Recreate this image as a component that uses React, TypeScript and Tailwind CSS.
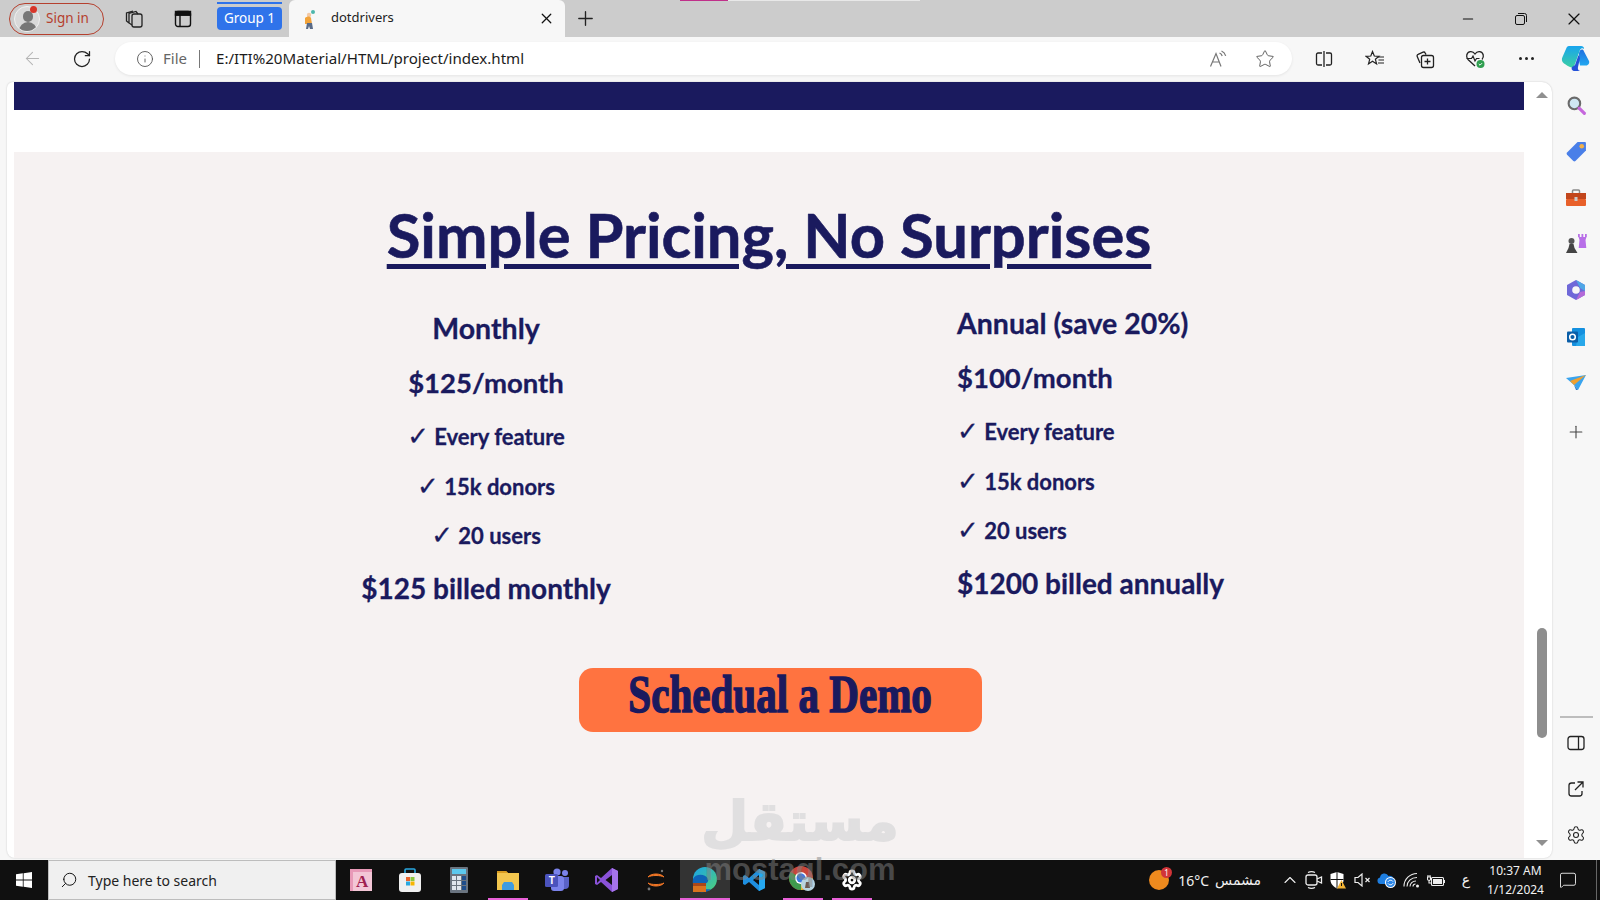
import React from 'react';
import {
  ArrowLeft, RotateCw, Info, Star, Plus, X, Minus, Search, Settings, ChevronUp,
  MessageSquare,
} from 'lucide-react';

const NAVY = 'text-[#1a1a5e]';

// --- browser chrome icons ---
const Workspaces = () => (
  <svg width="20" height="20" viewBox="0 0 20 20" fill="none" stroke="#222" strokeWidth="1.3">
    <rect x="8" y="5" width="10" height="13" rx="2" />
    <path d="M8 16 5 14V4.5L12 2.5 14 5M5 14 2.5 12V4L9 2" />
  </svg>
);
const VerticalTabs = () => (
  <svg width="18" height="18" viewBox="0 0 18 18" fill="none" stroke="#111" strokeWidth="1.4">
    <rect x="1.5" y="1.5" width="15" height="15" rx="2.5" />
    <path d="M1.5 5h15M6 5v11.5" />
    <path d="M1.5 1.5h15v3.5h-15z" fill="#111" />
  </svg>
);
const Avatar = () => (
  <div className="relative w-[26px] h-[26px] rounded-full bg-[#d9d9d9] border border-[#f0f0f0] overflow-hidden shrink-0">
    <div className="absolute left-[8px] top-[4px] w-[10px] h-[11px] rounded-full bg-[#777]" />
    <div className="absolute left-[4px] top-[15px] w-[18px] h-[12px] rounded-t-full bg-[#777]" />
  </div>
);
const Favicon = () => (
  <svg width="18" height="22" viewBox="0 0 18 22">
    <circle cx="12" cy="4" r="2" fill="#4db6ac" />
    <circle cx="8" cy="7" r="2.2" fill="#f3c9a5" />
    <path d="M4 10c2-2 5-2 6 0l1 6H4z" fill="#f2a33a" />
    <path d="M6 15h5l1 6H9l-1-3-1 3H5z" fill="#5a6b88" />
  </svg>
);
const ReadAloud = () => (
  <svg width="20" height="18" viewBox="0 0 20 18" fill="none" stroke="#777" strokeWidth="1.2">
    <path d="M1.5 16.5 7 3.5l5 13M3.5 12h7" />
    <path d="M10.5 3c1.4.6 2.3 1.6 2.7 3M12.5 1c2 .8 3.5 2.4 4.2 4.8" />
  </svg>
);
const SplitScreen = () => (
  <svg width="18" height="18" viewBox="0 0 18 18" fill="none" stroke="#222" strokeWidth="1.3">
    <path d="M7 3H3a1.5 1.5 0 0 0-1.5 1.5v9A1.5 1.5 0 0 0 3 15h4M11 3h4a1.5 1.5 0 0 1 1.5 1.5v9A1.5 1.5 0 0 1 15 15h-4" />
    <path d="M9 1v16" />
  </svg>
);
const Favorites = () => (
  <svg width="20" height="18" viewBox="0 0 20 18" fill="none" stroke="#222" strokeWidth="1.2">
    <path d="M7.5 1.5 9.3 6l4.7.3-3.6 3 1.2 4.6-4.1-2.6-4 2.6 1.2-4.6-3.6-3L5.8 6z" />
    <path d="M13 7h6M13.500 10h5.500M13 13h6" />
  </svg>
);
const Collections = () => (
  <svg width="20" height="20" viewBox="0 0 20 20" fill="none" stroke="#222" strokeWidth="1.3">
    <path d="M5 14 2.2 7.5a1.6 1.6 0 0 1 .9-2.1l5-2.2a1.6 1.6 0 0 1 2.1.8l.8 1.6" />
    <rect x="6.5" y="6.5" width="12" height="12" rx="2" />
    <path d="M12.5 9.5v6M9.5 12.5h6" />
  </svg>
);
const Health = () => (
  <svg width="21" height="20" viewBox="0 0 21 20" fill="none">
    <path d="M10 17 3 10.5C.5 8 1.5 3 5.5 2.6 7.5 2.4 9 3.5 10 5c1-1.500 2.500-2.600 4.500-2.400C18.500 3 19.500 8 17 10.500" stroke="#222" strokeWidth="1.3" />
    <path d="M1.500 9.500h5l1.500-2.500 2 5 1.500-2.500h3" stroke="#222" strokeWidth="1.2" />
    <circle cx="15.500" cy="15" r="4" fill="#2e9e4f" />
    <path d="m13.800 15 1.200 1.200 2-2" stroke="#fff" strokeWidth="1" />
  </svg>
);
const Copilot = () => (
  <svg width="29" height="27" viewBox="0 0 29 27">
    <defs>
      <linearGradient id="cpa" x1="0" y1="0" x2="0" y2="1"><stop offset="0" stopColor="#1f6fe0" /><stop offset="1" stopColor="#22a8f0" /></linearGradient>
      <linearGradient id="cpb" x1="0" y1="0" x2="0" y2="1"><stop offset="0" stopColor="#18a4ee" /><stop offset="1" stopColor="#3ccfa4" /></linearGradient>
    </defs>
    <path d="M18 8c1-4 4-4.500 5-1.500l5 9.500c.8 2-.5 4.500-3 4.500h-6l-1-5z" fill="url(#cpa)" />
    <path d="M8 1h12c2 0 3.500 1.500 3 3-1-1-3-1-4 1L14 19c-1 3-3 4-5 3-1-.5-4-2-6-3.500C.5 16.500.5 14 1.500 12L5 4c.7-2 1.500-3 3-3z" fill="url(#cpb)" />
    <path d="M14 20 17.500 10 19 13l-2 9c-.5 3 1 4 3 4h-6c-3 0-4-2-3-4z" fill="#2452d8" />
  </svg>
);
const Restore = () => (
  <svg width="12" height="12" viewBox="0 0 12 12" fill="none" stroke="#111" strokeWidth="1">
    <rect x=".5" y="2.500" width="9" height="9" rx="1.500" />
    <path d="M3 .5h6.500a2 2 0 0 1 2 2V9" />
  </svg>
);

// --- sidebar icons ---
const SideSearch = () => (
  <svg width="21" height="21" viewBox="0 0 20 20" fill="none">
    <circle cx="8" cy="8" r="5.500" fill="#cfe6f2" stroke="#6a6a6a" strokeWidth="2" />
    <path d="m12.500 12.500 5 5" stroke="#c667dd" strokeWidth="3" strokeLinecap="round" />
  </svg>
);
const SideTag = () => (
  <svg width="21" height="21" viewBox="0 0 20 20">
    <path d="M11 1h7a1 1 0 0 1 1 1v7L9 19a1.500 1.500 0 0 1-2 0L1 13a1.500 1.500 0 0 1 0-2z" fill="#4a7fe8" />
    <circle cx="15" cy="5" r="2.200" fill="#f2b04a" />
  </svg>
);
const SideTools = () => (
  <svg width="22" height="18" viewBox="0 0 22 18">
    <path d="M7.500 4V2a1 1 0 0 1 1-1h5a1 1 0 0 1 1 1v2" fill="none" stroke="#8a8a8a" strokeWidth="1.500" />
    <rect x="1" y="4" width="20" height="6" fill="#c2461c" />
    <rect x="1" y="10" width="20" height="7" rx="1" fill="#e8602a" />
    <rect x="9.500" y="8" width="3" height="4" fill="#c9c9c9" />
  </svg>
);
const SideChess = () => (
  <svg width="22" height="22" viewBox="0 0 22 22">
    <rect x="13" y="1" width="1.800" height="3" fill="#b86fe8" /><rect x="16.500" y="1" width="1.800" height="3" fill="#b86fe8" /><rect x="20" y="1" width="1.800" height="3" fill="#b86fe8" />
    <path d="M13.500 4h8l-1 3 .8 8h-7.600l.8-8z" fill="#b86fe8" />
    <circle cx="6.500" cy="8" r="3" fill="#555" />
    <path d="M4.500 11h4l1 4 3 5H1l2.500-5z" fill="#444" />
  </svg>
);
const SideM365 = () => (
  <svg width="20" height="22" viewBox="0 0 20 22" fill="none">
    <path d="M10 1 19 6v10l-9 5-9-5V6z" fill="#6f68d8" />
    <path d="M10 1 19 6v6l-5-3z" fill="#4fa6e6" />
    <path d="M10 21l9-5v-4l-5 1z" fill="#b46ad8" />
    <circle cx="10" cy="11" r="3.800" fill="#f7f7f7" />
  </svg>
);
const SideOutlook = () => (
  <svg width="20" height="20" viewBox="0 0 20 20">
    <rect x="6" y="1" width="13" height="18" rx="1" fill="#1490df" />
    <path d="M12 10l7-4v13h-9z" fill="#28a8ea" />
    <rect x="1" y="4.500" width="11" height="11" rx="1" fill="#0a5ea8" />
    <circle cx="6.500" cy="10" r="2.800" fill="none" stroke="#fff" strokeWidth="1.500" />
  </svg>
);
const SideSend = () => (
  <svg width="20" height="16" viewBox="0 0 20 16">
    <path d="M0 3 20 0 12 15 8 10z" fill="#3aa4ee" />
    <path d="M4 6 20 0 8 10z" fill="#f0a030" />
    <path d="M8 10 10 15 12 15z" fill="#2878c8" />
  </svg>
);
const SidePanel = () => (
  <svg width="18" height="16" viewBox="0 0 18 16" fill="none" stroke="#222" strokeWidth="1.300">
    <rect x="1" y="1.500" width="16" height="13" rx="2.500" />
    <path d="M11.500 1.500v13" />
  </svg>
);
const SideOpen = () => (
  <svg width="18" height="18" viewBox="0 0 18 18" fill="none" stroke="#222" strokeWidth="1.300">
    <path d="M8 3H4.500A2.500 2.500 0 0 0 2 5.500v8A2.500 2.500 0 0 0 4.500 16h8a2.500 2.500 0 0 0 2.500-2.500V11" />
    <path d="M8 10 16 2M10.500 2H16v5.500" />
  </svg>
);

// --- taskbar icons ---
const WinLogo = () => (
  <svg width="16" height="16" viewBox="0 0 16 16" fill="#fff">
    <path d="M0 2.300 6.800 1.300V7.600H0zM7.600 1.200 16 0V7.600H7.600zM0 8.400H6.800V14.700L0 13.700zM7.600 8.400H16V16L7.600 14.800z" />
  </svg>
);
const TbAccess = () => (
  <div className="relative w-[22px] h-[22px] bg-[#f3c6d6] border-l-[3px] border-t-[3px] border-[#e89ab8] flex items-center justify-center text-[17px] font-bold leading-none text-[#a02050] font-['Liberation_Serif',serif]">
    A
  </div>
);
const TbStore = () => (
  <svg width="24" height="26" viewBox="0 0 24 26">
    <path d="M7 7V3a1 1 0 0 1 1-1h8a1 1 0 0 1 1 1v4" fill="none" stroke="#29a8e0" strokeWidth="1.600" />
    <rect x="1" y="6" width="22" height="19" rx="3" fill="#f0f0f0" />
    <rect x="8" y="10" width="4" height="4" fill="#e8622c" /><rect x="12.500" y="10" width="4" height="4" fill="#8cc63f" />
    <rect x="8" y="14.500" width="4" height="4" fill="#29a8e0" /><rect x="12.500" y="14.500" width="4" height="4" fill="#f7b500" />
  </svg>
);
const TbCalc = () => (
  <svg width="18" height="26" viewBox="0 0 18 26">
    <rect width="18" height="26" rx="1" fill="#6a7480" />
    <rect x="2" y="2" width="14" height="5" fill="#5cc8ee" />
    {[9, 14, 19].map((y) => [2, 7, 12].map((x) => (
      <rect key={`${x}-${y}`} x={x} y={y} width="4" height="4" fill={x === 12 ? '#1f4e8c' : '#dfe6ee'} />
    )))}
  </svg>
);
const TbFiles = () => (
  <svg width="24" height="22" viewBox="0 0 24 22">
    <path d="M1 2h9l2 2h11v17H1z" fill="#f3c64e" />
    <path d="M1 2h9l2 2H1z" fill="#d99c20" />
    <path d="M6 21v-5l2-3h8l2 3v5z" fill="#3f9be0" />
  </svg>
);
const TbTeams = () => (
  <div className="relative w-[26px] h-[24px]">
    <svg width="26" height="24" viewBox="0 0 26 24" className="absolute inset-0">
      <circle cx="21" cy="5" r="3" fill="#7b83eb" />
      <path d="M15 9h10v8a4 4 0 0 1-4 4h-6z" fill="#5b63c8" />
      <circle cx="13" cy="4" r="3.600" fill="#7b83eb" />
      <rect x="7" y="8" width="13" height="15" rx="3" fill="#7b83eb" />
      <rect x="1" y="6" width="13" height="13" rx="1.500" fill="#4b53bc" />
    </svg>
    <span className="absolute left-[1px] top-[6px] w-[13px] h-[13px] text-center text-[10px] leading-[13px] font-bold text-white font-['Liberation_Sans',sans-serif]">T</span>
  </div>
);
const TbVS = () => (
  <svg width="24" height="26" viewBox="0 0 24 26">
    <path d="M17 1 23 4V22L17 25 6 15 2 18 0 17V9L2 8 6 11zM17 8 10.500 13 17 18z" fill="#8a52d8" />
    <path d="M2 10v6l3-3z" fill="#111" />
    <path d="M17 1 23 4V22L17 25z" fill="#a673ea" />
  </svg>
);
const TbJupyter = () => (
  <svg width="20" height="24" viewBox="0 0 20 24" fill="none">
    <path d="M2 9c3-4 13-4 16 0-3-2-13-2-16 0zM2 15c3 4 13 4 16 0-3 2-13 2-16 0z" fill="#f37726" stroke="#f37726" />
    <circle cx="16" cy="3" r="1.200" fill="#777" /><circle cx="3" cy="21" r="1.400" fill="#777" />
  </svg>
);
const TbEdge = () => (
  <svg width="26" height="26" viewBox="0 0 26 26">
    <defs>
      <linearGradient id="edg" x1="0" y1="0" x2="1" y2="1"><stop offset="0" stopColor="#1aa4e8" /><stop offset="1" stopColor="#4fd07a" /></linearGradient>
    </defs>
    <circle cx="13" cy="12" r="12" fill="url(#edg)" />
    <path d="M1 12c2-5 12-6 15 0 1 3-2 5-5 5-4 0 1 7 8 5-4 4-10 4-14 2-3-2-5-7-4-12z" fill="#0e63b8" />
    <rect x="1" y="16" width="13" height="9" fill="#d9731f" />
    <rect x="1" y="16" width="13" height="3" fill="#a9471a" />
  </svg>
);
const TbVSCode = () => (
  <svg width="24" height="24" viewBox="0 0 24 24">
    <path d="M17 1 23 4V20L17 23 7 14 3 17 1 16V8L3 7 7 10zM17 7 11 12 17 17z" fill="#1e8fe0" />
    <path d="M17 1 23 4V20L17 23z" fill="#25a8f0" />
  </svg>
);
const TbChrome = () => (
  <svg width="28" height="28" viewBox="0 0 28 28">
    <circle cx="12" cy="12" r="12" fill="#c8453a" />
    <path d="M12 12 1.600 6a12 12 0 0 0 10.400 18z" fill="#3f9a4d" />
    <path d="M12 12h12a12 12 0 0 1-12 12z" fill="#e6b93a" />
    <circle cx="12" cy="12" r="6" fill="#fff" />
    <circle cx="12" cy="12" r="4.500" fill="#3b78e0" />
    <circle cx="19" cy="18" r="7" fill="#b8d4e0" />
    <path d="M17 16h3l1 6h-5z" fill="#6d5a50" />
  </svg>
);

// --- tray icons ---
const TrayMeet = () => (
  <svg width="18" height="20" viewBox="0 0 18 20" fill="none" stroke="#eee" strokeWidth="1.300">
    <rect x="1" y="5" width="11" height="10" rx="2" />
    <path d="M12 9l4.500-2v6L12 11" />
    <path d="M3 2.500c2-1 5-1 7 0M3 17.500c2 1 5 1 7 0" />
  </svg>
);
const TrayShield = () => (
  <svg width="16" height="17" viewBox="0 0 16 17">
    <path d="M7 0l6.500 2v6c0 4-3 6.500-6.500 8.500C3.500 14.500.5 12 .5 8V2z" fill="#fff" />
    <path d="M7 0v16M.5 7.500h13" stroke="#111" strokeWidth="1" />
    <path d="M11.500 8 16 16.500H7z" fill="#f2b233" />
    <path d="M11.500 11v3" stroke="#111" strokeWidth="1" />
  </svg>
);
const TraySpeaker = () => (
  <svg width="17" height="14" viewBox="0 0 17 14" fill="none" stroke="#eee" strokeWidth="1.200">
    <path d="M1 4.500h3L8 1v12L4 9.500H1z" />
    <path d="m11.500 5 4 4M15.500 5l-4 4" />
  </svg>
);
const TrayCloud = () => (
  <svg width="20" height="17" viewBox="0 0 20 17">
    <path d="M3.500 12a3.300 3.300 0 0 1-.5-6.500A4.500 4.500 0 0 1 11.500 4 3.500 3.500 0 0 1 14 12z" fill="#1e7ee0" />
    <circle cx="13.500" cy="10.500" r="5.500" fill="#fff" />
    <circle cx="13.500" cy="10.500" r="4.500" fill="#2a86e8" />
    <path d="M11 10c.5-2 3.500-2.500 5-.5M16 11c-.5 2-3.500 2.500-5 .5" stroke="#fff" strokeWidth="1" fill="none" />
  </svg>
);
const TrayWifi = () => (
  <svg width="17" height="16" viewBox="0 0 17 16" fill="none" stroke="#eee" strokeWidth="1.100">
    <path d="M1 14.500C1 7 7 1.500 14 1.500M4 14.500c0-5 4-9 10-9M7 14.500c0-3 2.500-5.500 6-5.500M10 14.500c0-1.500 1-2.500 2.500-2.500" />
    <circle cx="14.500" cy="14" r="1.500" fill="#eee" stroke="none" />
  </svg>
);
const TrayBattery = () => (
  <svg width="18" height="13" viewBox="0 0 18 13" fill="none" stroke="#eee" strokeWidth="1.100">
    <rect x="4.500" y="3.500" width="12" height="8" rx="1" />
    <rect x="6" y="5" width="9" height="5" fill="#eee" stroke="none" />
    <path d="M17.500 6v3M1 1v2M3 1v2M.5 3h3v2a1.500 1.500 0 0 1-3 0zM2 6.500V9h2.500" />
  </svg>
);

const Tray = ({ children, className }: { children: React.ReactNode; className: string }) => (
  <div className={`flex items-center justify-center shrink-0 ${className}`}>{children}</div>
);

const ToolIcon = ({ children, className = 'w-[50px]' }: { children: React.ReactNode; className?: string }) => (
  <div className={`flex items-center justify-center shrink-0 h-full ${className}`}>{children}</div>
);

const TitleBar = () => (
  <div className="relative h-[37px] bg-[#cccccc] flex items-center shrink-0">
    <div className="absolute top-0 left-[680px] w-[48px] h-px bg-[#c0308a]" />
    <div className="absolute top-0 left-[728px] w-[192px] h-px bg-[#e8e8e8]" />
    <div className="relative ml-[9px] w-[95px] h-[32px] rounded-full border-[1.5px] border-[#b5402e] flex items-center gap-[6px] pl-[4px] text-[13.500px] text-[#b5402e]">
      <Avatar />
      <div className="absolute left-[20px] top-[2px] w-[7px] h-[7px] rounded-full bg-[#d8362a]" />
      <span className="-mt-px">Sign in</span>
    </div>
    <ToolIcon className="w-[30px] ml-[15px]"><Workspaces /></ToolIcon>
    <ToolIcon className="w-[30px] ml-[19px]"><VerticalTabs /></ToolIcon>
    <div className="relative ml-[19px] w-[65px] h-[23px] rounded-[4px] bg-[#2f73ea] text-white text-[13.500px] flex items-center justify-center">
      <span className="-mt-px">Group 1</span>
      <div className="absolute -top-[5px] inset-x-0 h-[2px] bg-[#2f73ea]" />
    </div>
    <div className="ml-[7px] w-[276px] self-end h-[37px] bg-[#f7f7f7] rounded-t-[6px] flex items-center pl-[12px] pr-[10px] text-[13px] text-[#222]">
      <Favicon />
      <span className="ml-[12px] -mt-px flex-1">dotdrivers</span>
      <X size={17} strokeWidth={1.8} className="text-[#111]" />
    </div>
    <ToolIcon className="w-[40px]"><Plus size={23} strokeWidth={1.4} className="text-[#222]" /></ToolIcon>
    <div className="ml-auto flex h-full">
      <ToolIcon className="w-[53px]"><Minus size={16} strokeWidth={1.6} className="text-[#111]" /></ToolIcon>
      <ToolIcon className="w-[53px]"><Restore /></ToolIcon>
      <ToolIcon className="w-[53px]"><X size={20} strokeWidth={1.4} className="text-[#111]" /></ToolIcon>
    </div>
  </div>
);

const AddressBar = () => (
  <div className="h-[45px] pb-[2px] bg-[#f7f7f7] flex items-center shrink-0">
    <ToolIcon className="w-[50px] ml-[7px]"><ArrowLeft size={21} strokeWidth={1.2} className="text-[#b5b5b5]" /></ToolIcon>
    <ToolIcon className="w-[50px]"><RotateCw size={20} strokeWidth={1.5} className="text-[#222]" /></ToolIcon>
    <div className="ml-[8px] w-[1177px] h-[33px] rounded-full bg-white shadow-[0_1px_3px_rgba(0,0,0,0.08)] flex items-center pl-[21px] pr-[17px] text-[15px]">
      <Info size={18} strokeWidth={1.2} className="text-[#555]" />
      <span className="ml-[9px] text-[#666]">File</span>
      <div className="ml-[12px] w-px h-[18px] bg-[#777]" />
      <span className="ml-[16px] text-[15.100px] text-[#1c1c1c]">E:/ITI%20Material/HTML/project/index.html</span>
      <div className="ml-auto flex items-center gap-[26px]">
        <ReadAloud />
        <Star size={20} strokeWidth={1.1} className="text-[#555]" />
      </div>
    </div>
    <ToolIcon className="w-[50px] ml-[7px]"><SplitScreen /></ToolIcon>
    <ToolIcon className="w-[51px]"><Favorites /></ToolIcon>
    <ToolIcon><Collections /></ToolIcon>
    <ToolIcon className="w-[51px]"><Health /></ToolIcon>
    <ToolIcon className="w-[51px]">
      <div className="flex gap-[3px]">
        <div className="w-[3px] h-[3px] rounded-full bg-[#222]" />
        <div className="w-[3px] h-[3px] rounded-full bg-[#222]" />
        <div className="w-[3px] h-[3px] rounded-full bg-[#222]" />
      </div>
    </ToolIcon>
    <ToolIcon className="w-[46px]"><Copilot /></ToolIcon>
  </div>
);

const rowHeights = ['h-[55px]', 'h-[54px]', 'h-[50px]', 'h-[49px]', 'h-[52px]', 'h-[40px]'];
const rowSizes = ['text-[28.500px]', 'text-[27.500px]', 'text-[22px]', 'text-[22px]', 'text-[22px]', 'text-[28px]'];

const PriceColumn = ({ rows, className }: { rows: string[]; className: string }) => (
  <div className={`flex flex-col ${className}`}>
    {rows.map((row, i) => (
      <div key={i} className={`${rowHeights[i]} ${rowSizes[i]} leading-[40px] font-bold ${NAVY} whitespace-nowrap [-webkit-text-stroke:0.3px_#1a1a5e]`}>
        {row.startsWith('✓') ? (
          <>
            <span className="font-['DejaVu_Sans',sans-serif] font-normal text-[26px] leading-[26px]">✓</span>{row.slice(1)}
          </>
        ) : row}
      </div>
    ))}
  </div>
);

const monthly = ['Monthly', '$125/month', '✓ Every feature', '✓ 15k donors', '✓ 20 users', '$125 billed monthly'];
const annual = ['Annual (save 20%)', '$100/month', '✓ Every feature', '✓ 15k donors', '✓ 20 users', '$1200 billed annually'];

const Pricing = () => (
  <section className="flex-1 bg-[#f6f2f2] font-['Lato',sans-serif] overflow-hidden">
    <h1 className={`mt-[47px] text-center text-[61.500px] leading-[70px] font-bold underline decoration-[5px] underline-offset-[6px] [-webkit-text-stroke:0.6px_#1a1a5e] ${NAVY}`}>
      Simple Pricing, No Surprises
    </h1>
    <div className="flex items-start mt-[34px]">
      <PriceColumn rows={monthly} className="ml-[222px] w-[500px] text-center mt-[5px]" />
      <PriceColumn rows={annual} className="ml-[221px] text-left" />
    </div>
    <button className={`mt-[60px] ml-[565px] w-[403px] h-[64px] rounded-[14px] bg-[#ff7340] flex items-center justify-center font-['Liberation_Serif',serif] font-bold ${NAVY}`}>
      <span className="text-[52px] leading-[52px] scale-x-[0.79] whitespace-nowrap -mt-[10px] [-webkit-text-stroke:1.5px_#1a1a5e]">Schedual a Demo</span>
    </button>
  </section>
);

const Sidebar = () => (
  <aside className="w-[48px] flex flex-col items-center shrink-0 pb-[2px]">
    {[<SideSearch />, <SideTag />, <SideTools />, <SideChess />, <SideM365 />, <SideOutlook />, <SideSend />].map((icon, i) => (
      <div key={i} className="h-[46.300px] w-full flex items-center justify-center">{icon}</div>
    ))}
    <div className="mt-[3px] h-[46px] w-full flex items-center justify-center"><Plus size={20} strokeWidth={1.3} className="text-[#444]" /></div>
    <div className="mt-auto w-[33px] h-[2px] bg-[#bdbdbd] mb-[2px]" />
    <div className="h-[46px] flex items-center"><SidePanel /></div>
    <div className="h-[46px] flex items-center"><SideOpen /></div>
    <div className="h-[46px] flex items-center"><Settings size={20} strokeWidth={1.3} className="text-[#222]" /></div>
  </aside>
);

const Scrollbar = () => (
  <div className="w-[28px] pl-[8px] flex flex-col items-center shrink-0">
    <div className="mt-[10px] w-0 h-0 border-x-[6px] border-x-transparent border-b-[6px] border-b-[#909090]" />
    <div className="mt-[530px] w-[10px] h-[110px] rounded-full bg-[#8e8e8e]" />
    <div className="mt-[102px] w-0 h-0 border-x-[6px] border-x-transparent border-t-[6px] border-t-[#909090]" />
  </div>
);

const TaskIcon = ({ children, under = '', className = '' }: { children: React.ReactNode; under?: string; className?: string }) => (
  <div className={`relative w-[49.200px] h-full flex items-center justify-center shrink-0 ${className}`}>
    {children}
    {under && <div className={`absolute bottom-0 h-[2px] bg-[#e860d8] ${under}`} />}
  </div>
);

const Taskbar = () => (
  <div className="h-[40px] bg-[#101010] flex items-center shrink-0 text-[#f0f0f0] font-['Noto_Sans',sans-serif]">
    <div className="w-[48px] flex justify-center"><WinLogo /></div>
    <div className="w-[288px] h-full bg-[#f0f0f0] border border-[#bdbdbd] flex items-center pl-[11px] text-[14px] text-[#222]">
      <Search size={18} strokeWidth={1.3} className="-scale-x-100 text-[#111]" />
      <span className="ml-[10px]">Type here to search</span>
    </div>
    <div className="flex h-full">
      <TaskIcon><TbAccess /></TaskIcon>
      <TaskIcon><TbStore /></TaskIcon>
      <TaskIcon><TbCalc /></TaskIcon>
      <TaskIcon under="w-[40px]"><TbFiles /></TaskIcon>
      <TaskIcon><TbTeams /></TaskIcon>
      <TaskIcon><TbVS /></TaskIcon>
      <TaskIcon><TbJupyter /></TaskIcon>
      <TaskIcon under="w-full" className="bg-[#333333]"><TbEdge /></TaskIcon>
      <TaskIcon><TbVSCode /></TaskIcon>
      <TaskIcon under="w-[40px]"><TbChrome /></TaskIcon>
      <TaskIcon under="w-[40px]"><Settings size={22} strokeWidth={3} className="text-white" /></TaskIcon>
    </div>
    <div className="ml-auto flex items-center h-full text-[13px]">
      <div className="relative w-[20px] h-[20px] rounded-full bg-[#ee8a1e] mr-[9px]">
        <div className="absolute -top-[3px] -right-[3px] w-[11px] h-[11px] rounded-full bg-[#d13438] text-[8px] leading-[11px] text-center text-white">1</div>
      </div>
      <span className="text-[14px]">16°C</span>
      <span className="ml-[6px] w-[46px] text-[14px] font-['DejaVu_Sans',sans-serif]" dir="rtl">مشمس</span>
      <Tray className="w-[25px] ml-[16px]"><ChevronUp size={20} strokeWidth={1.3} /></Tray>
      <Tray className="w-[24px]"><TrayMeet /></Tray>
      <Tray className="w-[24px]"><TrayShield /></Tray>
      <Tray className="w-[24px]"><TraySpeaker /></Tray>
      <Tray className="w-[25px]"><TrayCloud /></Tray>
      <Tray className="w-[25px]"><TrayWifi /></Tray>
      <Tray className="w-[24px]"><TrayBattery /></Tray>
      <span className="w-[36px] text-center text-[14px] font-['DejaVu_Sans',sans-serif]">ع</span>
      <div className="w-[63px] text-center leading-[19px] text-[12px]">
        <div>10:37 AM</div>
        <div>1/12/2024</div>
      </div>
      <Tray className="w-[37px] ml-[2px] mr-[10px]"><MessageSquare size={18} strokeWidth={1.2} /></Tray>
      <div className="w-px h-full bg-[#666] mr-[3px]" />
    </div>
  </div>
);

export default function App() {
  return (
    <div className="relative w-[1600px] h-[900px] overflow-hidden flex flex-col bg-[#f7f7f7] font-['Noto_Sans',sans-serif]">
      <TitleBar />
      <AddressBar />
      <div className="flex-1 flex min-h-0 pl-[7px]">
        <div className="flex-1 flex bg-white rounded-tl-[6px] rounded-b-[8px] rounded-tr-[10px] mb-[2px] shadow-[0_0_2px_rgba(0,0,0,0.2)] pl-[7px] overflow-hidden">
          <main className="flex-1 flex flex-col min-w-0">
            <div className="h-[28px] bg-[#1a1a5e] shrink-0" />
            <div className="h-[42px] shrink-0" />
            <Pricing />
          </main>
          <Scrollbar />
        </div>
        <Sidebar />
      </div>
      <Taskbar />
      {/* mostaql watermark, sits over page and taskbar */}
      <div className="absolute left-[704px] top-[790px] w-[192px] flex flex-col items-center pointer-events-none">
        <div dir="rtl" className="h-[64px] text-[54px] leading-[64px] font-bold text-[#e0dfe0] [-webkit-text-stroke:2px_#e0dfe0] font-['DejaVu_Sans',sans-serif]">مستقل</div>
        <div className="text-[31px] leading-[32px] font-bold text-[rgba(130,130,130,0.5)] font-['Liberation_Sans',sans-serif]">mostaql.com</div>
      </div>
    </div>
  );
}
